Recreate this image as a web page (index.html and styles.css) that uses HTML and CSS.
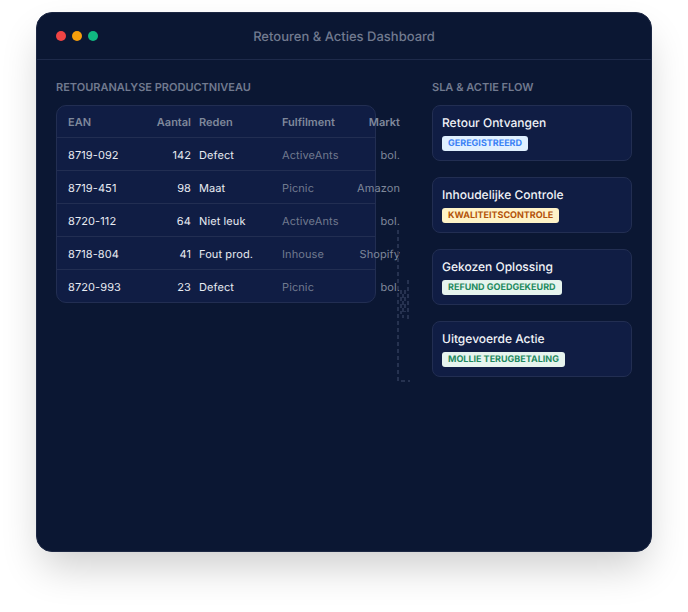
FILE: index.html
```html
<!DOCTYPE html>
<html lang="nl">
<head>
<meta charset="utf-8">
<title>Retouren &amp; Acties Dashboard</title>
<link rel="stylesheet" href="styles.css">
</head>
<body>
<div class="window">
  <header class="titlebar">
    <div class="lights"><span class="light red"></span><span class="light amber"></span><span class="light green"></span></div>
    <div class="title">Retouren &amp; Acties Dashboard</div>
  </header>
  <main class="content">
    <section class="left">
      <h2 class="heading">RETOURANALYSE PRODUCTNIVEAU</h2>
      <div class="table">
        <div class="row head"><span>EAN</span><span class="num">Aantal</span><span>Reden</span><span>Fulfilment</span><span class="num">Markt</span></div>
        <div class="row"><span>8719-092</span><span class="num">142</span><span>Defect</span><span class="dim">ActiveAnts</span><span class="num dim">bol.</span></div>
        <div class="row"><span>8719-451</span><span class="num">98</span><span>Maat</span><span class="dim">Picnic</span><span class="num dim">Amazon</span></div>
        <div class="row"><span>8720-112</span><span class="num">64</span><span>Niet leuk</span><span class="dim">ActiveAnts</span><span class="num dim">bol.</span></div>
        <div class="row"><span>8718-804</span><span class="num">41</span><span>Fout prod.</span><span class="dim">Inhouse</span><span class="num dim">Shopify</span></div>
        <div class="row last"><span>8720-993</span><span class="num">23</span><span>Defect</span><span class="dim">Picnic</span><span class="num dim">bol.</span></div>
      </div>
      <svg class="connector" width="20" height="160" viewBox="0 0 20 160" aria-hidden="true">
        <path d="M6 4V155H18" />
        <path d="M16 54V96" />
        <path d="M9 64V88M11 68V92M13 64V86" />
      </svg>
    </section>
    <section class="right">
      <h2 class="heading">SLA &amp; ACTIE FLOW</h2>
      <div class="flow">
        <div class="card"><div class="card-title">Retour Ontvangen</div><span class="badge blue">GEREGISTREERD</span></div>
        <div class="card"><div class="card-title">Inhoudelijke Controle</div><span class="badge amber-b">KWALITEITSCONTROLE</span></div>
        <div class="card"><div class="card-title">Gekozen Oplossing</div><span class="badge mint">REFUND GOEDGEKEURD</span></div>
        <div class="card"><div class="card-title">Uitgevoerde Actie</div><span class="badge mint">MOLLIE TERUGBETALING</span></div>
      </div>
    </section>
  </main>
</div>
</body>
</html>
```
FILE: styles.css
```css
* { box-sizing: border-box; }
html, body { margin: 0; padding: 0; background: #fff; }
body { font-family: Inter, "Liberation Sans", sans-serif; text-rendering: geometricPrecision; height: 612px; overflow: hidden; padding: 12px 36px 0; }
.window { width: 616px; height: 540px; background: #0b1733; border-radius: 16px; box-shadow: 0 20px 40px -6px rgba(0,0,0,.2); border: 1px solid #1c2743; overflow: visible; }
.titlebar { height: 47px; border-bottom: 1px solid #1e2a4a; position: relative; display: flex; align-items: center; justify-content: center; padding-top: 1px; }
.lights { position: absolute; left: 19px; top: 18px; display: flex; gap: 6px; }
.light { width: 10px; height: 10px; border-radius: 50%; }
.red { background: #ef4444; }
.amber { background: #f59e0b; }
.green { background: #10b981; }
.title { font-size: 13px; color: #717a8f; font-weight: 500; }
.content { display: flex; gap: 32px; padding: 20px 19px; }
.left { width: 344px; position: relative; }
.right { width: 200px; }
.heading { margin: 0 0 11px; height: 14px; font-size: 11px; line-height: 14px; font-weight: 600; color: #717a8f; }
.table { width: 320px; height: 198px; background: #101d44; border: 1px solid #222e52; border-radius: 10px; }
.row { display: grid; grid-template-columns: 72px 43px 75px 1fr 30px; column-gap: 8px; height: 33px; align-items: center; padding: 0 0 0 11px; width: 343px; font-size: 11px; letter-spacing: .1px; color: #e8ebf2; border-bottom: 1px solid transparent; position: relative; }
.row > span { white-space: nowrap; }
.row.last { border-bottom: 0; height: 32px; }
.row::after { content: ""; position: absolute; left: 0; width: 318px; bottom: 0; height: 1px; background: #222e52; }
.row.last::after { display: none; }
.head { color: #7f889b; font-weight: 600; letter-spacing: 0; }
.dim { color: #717a8f; }
.num { text-align: right; justify-self: end; }
.dim.num { color: #7f889b; }
.connector { position: absolute; left: 0; top: 0; margin: 146px 0 0 336px; fill: none; stroke: #263250; stroke-width: 2; stroke-dasharray: 4 3; }
.flow { display: flex; flex-direction: column; gap: 16px; }
.card { height: 56px; background: #101d44; border: 1px solid #222e52; border-radius: 8px; padding: 9px 9px; display: flex; flex-direction: column; align-items: flex-start; }
.card-title { font-size: 12px; line-height: 16px; font-weight: 500; color: #f1f3f8; margin-bottom: 5px; }
.badge { display: block; height: 15px; line-height: 15px; padding: 0 6px; border-radius: 3px; font-size: 9px; font-weight: 700; }
.blue { background: #e0f0ff; color: #3b82f6; }
.amber-b { background: #fef3c7; color: #b45309; }
.mint { background: #e6f4ee; color: #1f8a5f; }
```
